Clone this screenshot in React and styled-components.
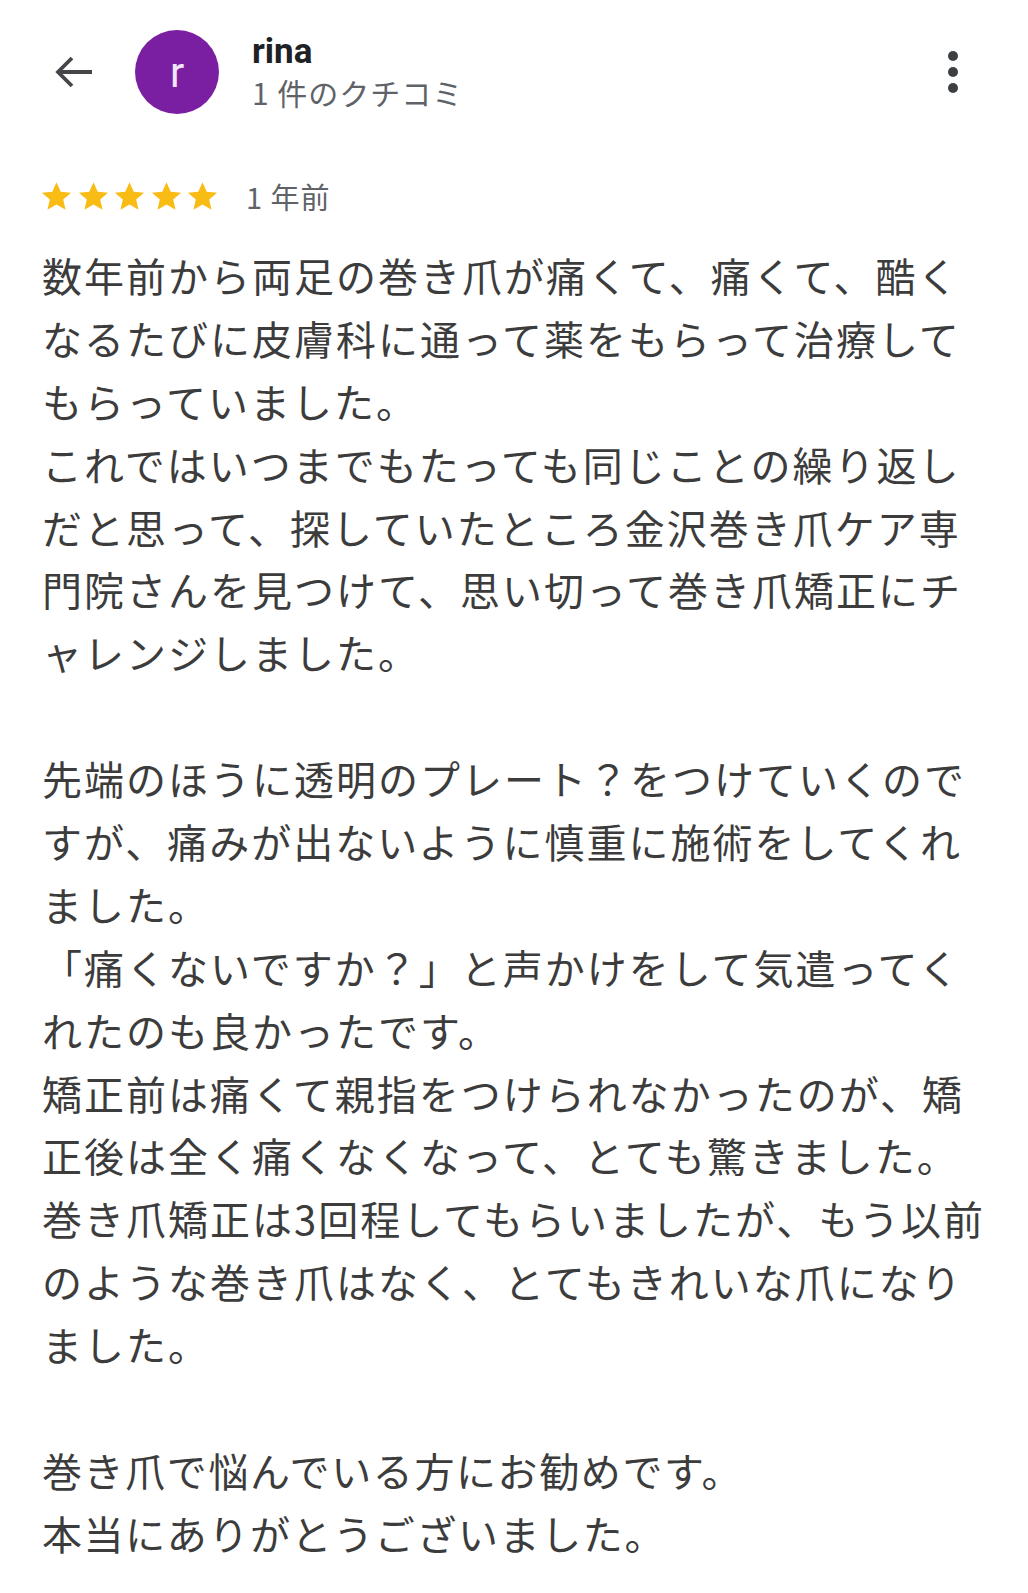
import React from "react";
import styled, { createGlobalStyle } from "styled-components";

const Global = createGlobalStyle`
  html, body { margin: 0; padding: 0; background: #ffffff; }
  body { font-family: "Noto Sans CJK JP", "Noto Sans", Roboto, sans-serif; }
`;

const Page = styled.div`
  width: 1028px;
  min-height: 1593px;
  background: #fff;
  box-sizing: border-box;
  padding: 30px 0 0 0;
`;

const Header = styled.header`
  display: flex;
  align-items: center;
  height: 84px;
  padding: 0 70px 0 49px;
`;

const BackButton = styled.div`
  width: 50px;
  height: 50px;
  display: flex;
  align-items: center;
  justify-content: center;
  margin-right: 36px;
  color: #444649;
`;

const Avatar = styled.div`
  width: 84px;
  height: 84px;
  border-radius: 50%;
  background: #7b1fa2;
  color: #f4e6fa;
  display: flex;
  align-items: center;
  justify-content: center;
  font-family: Roboto, "Noto Sans", sans-serif;
  font-size: 42px;
  flex-shrink: 0;
`;

const Who = styled.div`
  display: flex;
  flex-direction: column;
  margin-left: 33px;
  flex: 1;
`;

const Name = styled.div`
  font-family: Roboto, "Noto Sans", sans-serif;
  font-weight: 700;
  font-size: 35px;
  line-height: 40px;
  color: #202124;
`;

const Count = styled.div`
  font-size: 30px;
  line-height: 40px;
  color: #5f6368;
  letter-spacing: 1px;
`;

const Kebab = styled.div`
  display: flex;
  flex-direction: column;
  gap: 6px;
  align-items: center;
`;

const Dot = styled.span`
  width: 10px;
  height: 10px;
  border-radius: 50%;
  background: #3c4043;
`;

const RatingRow = styled.div`
  display: flex;
  align-items: center;
  padding: 0 0 0 39px;
  margin-top: 60px;
  height: 44px;
`;

const Stars = styled.div`
  display: flex;
  gap: 1.5px;
`;

const When = styled.span`
  margin-left: 26px;
  font-size: 29px;
  color: #5f6368;
  letter-spacing: 1px;
`;

const Body = styled.div`
  padding: 0 0 0 42px;
  margin-top: 26px;
  font-size: 40px;
  line-height: 63px;
  letter-spacing: 2px;
  color: #3c3c3c;
`;

const Line = styled.div`
  white-space: nowrap;
  height: 62.9px;
  letter-spacing: ${(p) => (p.$ls != null ? p.$ls : "inherit")};
`;

const Star = () => (
  <svg width="35" height="35" viewBox="0 0 24 24">
    <path
      fill="#f9bc15"
      d="M12 2.2l2.9 6.6 7.1.6-5.4 4.7 1.6 7-6.2-3.7-6.2 3.7 1.6-7L2 9.4l7.1-.6z"
    />
  </svg>
);

const lines = [
  ["数年前から両足の巻き爪が痛くて、痛くて、酷く"],
  ["なるたびに皮膚科に通って薬をもらって治療して"],
  ["もらっていました。"],
  ["これではいつまでもたっても同じことの繰り返し"],
  ["だと思って、探していたところ金沢巻き爪ケア専"],
  ["門院さんを見つけて、思い切って巻き爪矯正にチ"],
  ["ャレンジしました。"],
  [""],
  ["先端のほうに透明のプレート？をつけていくので"],
  ["すが、痛みが出ないように慎重に施術をしてくれ"],
  ["ました。"],
  ["「痛くないですか？」と声かけをして気遣ってく"],
  ["れたのも良かったです。"],
  ["矯正前は痛くて親指をつけられなかったのが、矯"],
  ["正後は全く痛くなくなって、とても驚きました。"],
  ["巻き爪矯正は3回程してもらいましたが、もう以前"],
  ["のような巻き爪はなく、とてもきれいな爪になり"],
  ["ました。"],
  [""],
  ["巻き爪で悩んでいる方にお勧めです。", "1.6px"],
  ["本当にありがとうございました。", "1.6px"],
];

export default function App() {
  return (
    <Page>
      <Global />
      <Header>
        <BackButton>
          <svg width="48" height="48" viewBox="0 0 24 24">
            <path
              fill="none"
              stroke="#444649"
              strokeWidth="1.9"
              d="M21 12H4M11 5l-7 7 7 7"
            />
          </svg>
        </BackButton>
        <Avatar>r</Avatar>
        <Who>
          <Name>rina</Name>
          <Count>1 件のクチコミ</Count>
        </Who>
        <Kebab>
          <Dot />
          <Dot />
          <Dot />
        </Kebab>
      </Header>
      <RatingRow>
        <Stars>
          <Star />
          <Star />
          <Star />
          <Star />
          <Star />
        </Stars>
        <When>1 年前</When>
      </RatingRow>
      <Body>
        {lines.map(([t, ls], i) => (
          <Line key={i} $ls={ls}>
            {t}
          </Line>
        ))}
      </Body>
    </Page>
  );
}
